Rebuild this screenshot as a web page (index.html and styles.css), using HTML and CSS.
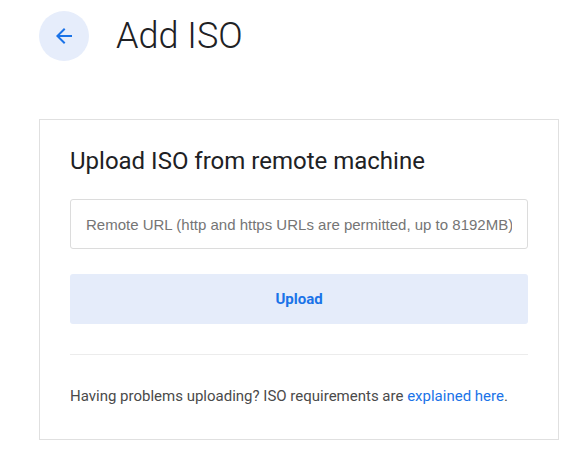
FILE: index.html
```html
<!DOCTYPE html>
<html>
<head>
<meta charset="utf-8">
<link rel="stylesheet" href="styles.css">
</head>
<body>
<header class="page-header">
  <button class="back-btn" aria-label="Back">
    <svg width="24" height="24" viewBox="0 0 24 24"><path fill="currentColor" d="M20 11H7.83l5.59-5.59L12 4l-8 8 8 8 1.41-1.41L7.83 13H20v-2z"/></svg>
  </button>
  <h1 class="page-title">Add ISO</h1>
</header>
<main class="card">
  <h2 class="card-title">Upload ISO from remote machine</h2>
  <input class="url-input" type="text" placeholder="Remote URL (http and https URLs are permitted, up to 8192MB)">
  <button class="upload-btn">Upload</button>
  <hr class="divider">
  <p class="help">Having problems uploading? ISO requirements are <a href="#">explained here</a>.</p>
</main>
</body>
</html>
```

FILE: styles.css
```css
* { box-sizing: border-box; }
body {
  margin: 0;
  background: #fff;
  font-family: Roboto, "Liberation Sans", sans-serif;
  color: #202124;
}
.page-header {
  display: flex;
  align-items: center;
  gap: 27px;
  padding: 11px 0 0 39px;
  height: 61px;
}
.back-btn {
  width: 50px;
  height: 50px;
  border-radius: 50%;
  border: none;
  background: #e6edfb;
  color: #1a73e8;
  display: flex;
  align-items: center;
  justify-content: center;
  padding: 0;
}
.back-btn svg { display: block; }
.page-title {
  margin: 0;
  font-size: 36px;
  font-weight: 300;
  line-height: 44px;
  color: #202124;
}
.card {
  margin: 58px 0 0 39px;
  width: 520px;
  border: 1px solid #e0e0e0;
  padding: 27px 30px 32px;
  display: flex;
  flex-direction: column;
}
.card-title {
  margin: 0 0 24px;
  font-size: 24px;
  font-weight: 400;
  line-height: 28px;
  color: #202124;
}
.url-input {
  height: 50px;
  width: 100%;
  border: 1px solid #dcdcdc;
  border-radius: 3px;
  padding: 0 15px;
  font-family: "Liberation Sans", Arial, sans-serif;
  font-size: 15px;
  color: #333;
}
.url-input::placeholder { color: #757575; }
.upload-btn {
  margin-top: 25px;
  height: 50px;
  width: 100%;
  border: none;
  border-radius: 3px;
  background: #e5ecfa;
  color: #1a73e8;
  font-family: Roboto, sans-serif;
  font-weight: 700;
  font-size: 15px;
}
.divider {
  margin: 30px 0 0;
  border: none;
  border-top: 1px solid #ececec;
  height: 0;
}
.help {
  margin: 31px 0 0;
  font-size: 15px;
  line-height: 21px;
  color: #4a4a4a;
}
.help a {
  color: #1a73e8;
  text-decoration: none;
}
```
